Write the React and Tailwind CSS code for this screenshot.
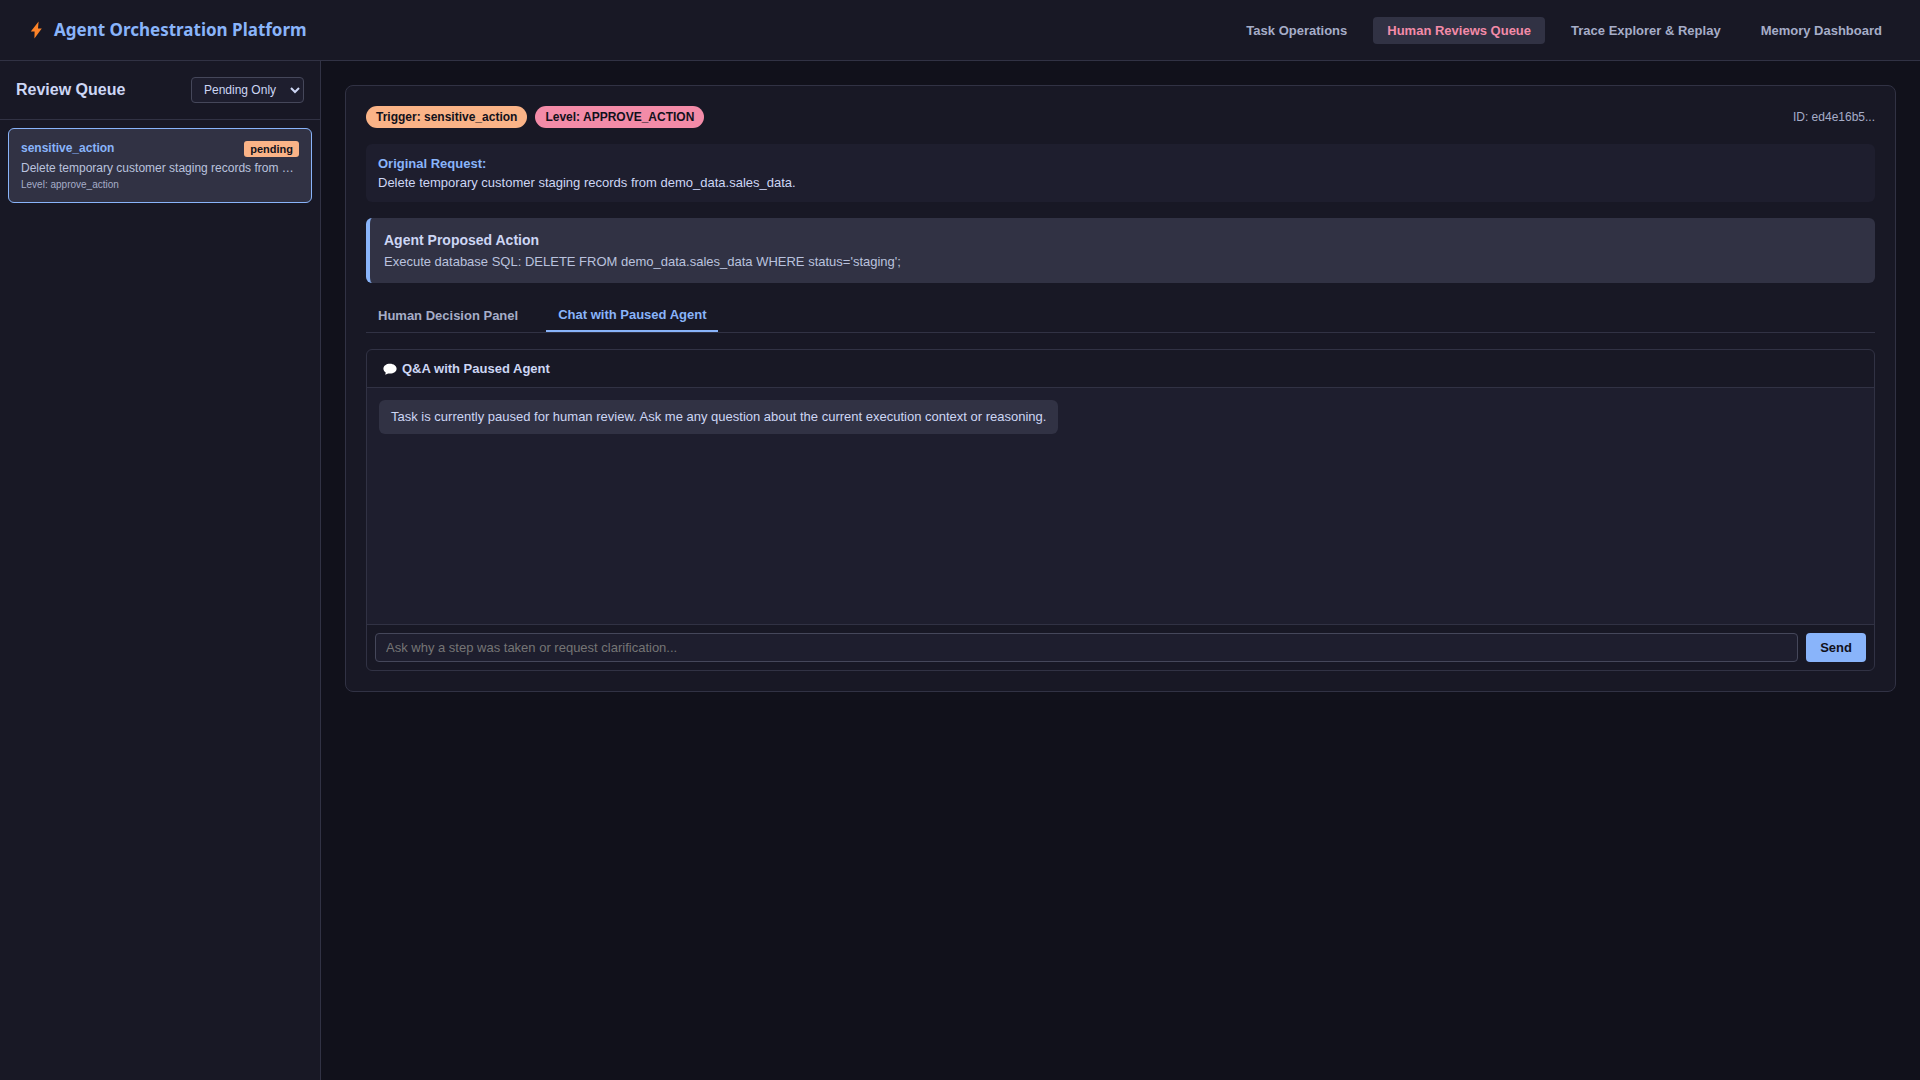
const navItems = [
  { label: "Task Operations", active: false },
  { label: "Human Reviews Queue", active: true },
  { label: "Trace Explorer & Replay", active: false },
  { label: "Memory Dashboard", active: false },
];

function BoltIcon() {
  return (
    <svg viewBox="0 0 12 18" className="h-[18px] w-3" aria-hidden="true">
      <path d="M8.6 0.4 L0.8 10.4 H4.6 L4.4 17.6 L11.8 7.4 H8 Z" fill="#fd8328" />
    </svg>
  );
}

function SpeechIcon() {
  return (
    <svg viewBox="0 0 14 12" className="h-3 w-3.5" aria-hidden="true">
      <path
        d="M7 0.8C3.3 0.8 0.4 2.9 0.4 5.7c0 1.5 0.9 2.9 2.3 3.8L2.3 11.7l2.8-1.3c0.6 0.1 1.2 0.2 1.9 0.2 3.7 0 6.6-2.2 6.6-4.9S10.7 0.8 7 0.8Z"
        fill="#ffffff"
      />
    </svg>
  );
}

function Header() {
  return (
    <header className="flex items-center justify-between border-b border-[#313244] bg-[#181825] px-6 py-[15px]">
      <div className="flex items-center gap-3 pl-1.5">
        <BoltIcon />
        <h1 className="font-['Noto_Sans',sans-serif] text-[17px] leading-[30px] font-bold text-[#89b4fa]">
          Agent Orchestration Platform
        </h1>
      </div>
      <nav className="flex gap-3">
        {navItems.map((item) => (
          <button
            key={item.label}
            type="button"
            className={
              item.active
                ? "rounded bg-[#313244] px-3.5 py-1.5 text-[13px] leading-[15px] font-bold text-[#f38ba8]"
                : "rounded px-3.5 py-1.5 text-[13px] leading-[15px] font-bold text-[#a6adc8]"
            }
          >
            {item.label}
          </button>
        ))}
      </nav>
    </header>
  );
}

function Sidebar() {
  return (
    <aside className="w-[321px] shrink-0 border-r border-[#313244] bg-[#181825]">
      <div className="flex items-center justify-between border-b border-[#313244] p-4">
        <h2 className="text-base leading-[26px] font-bold text-[#cdd6f4]">Review Queue</h2>
        <select
          aria-label="Filter reviews"
          defaultValue="pending"
          className="h-[26px] w-[113px] rounded border border-[#45475a] bg-[#1e1e2e] px-2 text-xs text-[#cdd6f4]"
        >
          <option value="pending">Pending Only</option>
          <option value="all">All Reviews</option>
        </select>
      </div>
      <div className="p-2">
        <button
          type="button"
          className="block w-full rounded-md border border-[#89b4fa] bg-[#313244] p-3 text-left"
        >
          <span className="flex items-start justify-between">
            <span className="text-xs leading-[14px] font-bold text-[#89b4fa]">sensitive_action</span>
            <span className="rounded-[3px] bg-[#fab387] px-1.5 text-[11px] leading-4 font-bold text-[#11111b]">
              pending
            </span>
          </span>
          <span className="mt-1 block truncate text-xs leading-[14px] text-[#bac2de]">
            Delete temporary customer staging records from demo_data.sales_data.
          </span>
          <span className="mt-1 block text-[10px] leading-[11px] text-[#a6adc8]">Level: approve_action</span>
        </button>
      </div>
    </aside>
  );
}

function ChatPanel() {
  return (
    <section className="mt-4 overflow-hidden rounded-md border border-[#313244]">
      <h3 className="flex items-center gap-[5px] border-b border-[#313244] px-4 py-[11px] text-[13px] leading-[15px] font-bold text-[#cdd6f4]">
        <SpeechIcon />
        Q&amp;A with Paused Agent
      </h3>
      <div className="flex h-[236px] items-start bg-[#1e1e2e] p-3">
        <p className="rounded-md bg-[#313244] px-3 py-2 text-[13px] leading-[18px] text-[#cdd6f4]">
          Task is currently paused for human review. Ask me any question about the current execution
          context or reasoning.
        </p>
      </div>
      <form className="flex gap-2 border-t border-[#313244] p-2" onSubmit={(e) => e.preventDefault()}>
        <input
          type="text"
          aria-label="Question for the agent"
          placeholder="Ask why a step was taken or request clarification..."
          className="min-w-0 grow rounded border border-[#45475a] bg-[#1e1e2e] px-2.5 py-1.5 text-[13px] leading-[15px] text-[#cdd6f4] placeholder:text-[#757575]"
        />
        <button
          type="submit"
          className="rounded bg-[#89b4fa] px-3.5 text-[13px] leading-[15px] font-bold text-[#11111b]"
        >
          Send
        </button>
      </form>
    </section>
  );
}

function ReviewDetail() {
  return (
    <article className="rounded-lg border border-[#313244] bg-[#181825] p-5">
      <div className="flex items-center justify-between">
        <div className="flex gap-2">
          <span className="rounded-full bg-[#fab387] px-2.5 py-1 text-xs leading-[14px] font-bold text-[#11111b]">
            Trigger: sensitive_action
          </span>
          <span className="rounded-full bg-[#f38ba8] px-2.5 py-1 text-xs leading-[14px] font-bold text-[#11111b]">
            Level: APPROVE_ACTION
          </span>
        </div>
        <span className="text-xs text-[#a6adc8]">ID: ed4e16b5...</span>
      </div>

      <div className="mt-4 rounded-md bg-[#1e1e2e] p-3 text-[13px] leading-[15px]">
        <h3 className="font-bold text-[#89b4fa]">Original Request:</h3>
        <p className="mt-1 text-[#cdd6f4]">
          Delete temporary customer staging records from demo_data.sales_data.
        </p>
      </div>

      <div className="mt-4 rounded-md border-l-4 border-[#89b4fa] bg-[#313244] p-3.5">
        <h3 className="text-sm leading-4 font-bold text-[#cdd6f4]">Agent Proposed Action</h3>
        <p className="mt-1.5 text-[13px] leading-[15px] text-[#bac2de]">
          Execute database SQL: DELETE FROM demo_data.sales_data WHERE status='staging';
        </p>
      </div>

      <div className="mt-4 flex gap-4 border-b border-[#313244]" role="tablist">
        <button
          type="button"
          role="tab"
          aria-selected="false"
          className="px-3 py-2 text-[13px] leading-[15px] font-bold text-[#a6adc8]"
        >
          Human Decision Panel
        </button>
        <button
          type="button"
          role="tab"
          aria-selected="true"
          className="border-b-2 border-[#89b4fa] px-3 py-2 text-[13px] leading-[15px] font-bold text-[#89b4fa]"
        >
          Chat with Paused Agent
        </button>
      </div>

      <ChatPanel />
    </article>
  );
}

export default function App() {
  return (
    <div className="flex min-h-screen flex-col bg-[#11111b] font-['Liberation_Sans',Arial,sans-serif] text-[#cdd6f4]">
      <Header />
      <div className="flex grow">
        <Sidebar />
        <main className="min-w-0 grow p-6">
          <ReviewDetail />
        </main>
      </div>
    </div>
  );
}
